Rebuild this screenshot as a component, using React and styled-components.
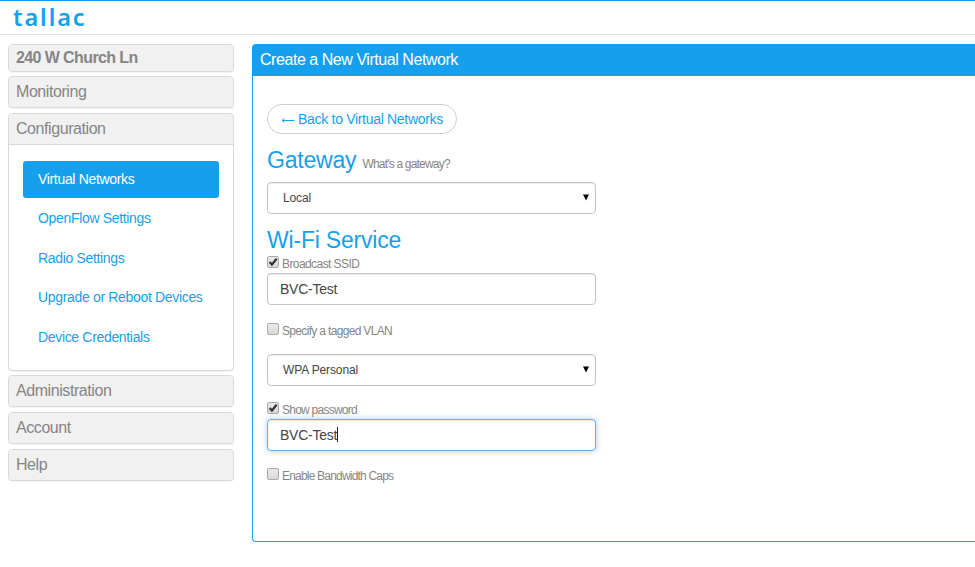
import React from "react";
import styled, { createGlobalStyle, css } from "styled-components";

const blue = "#169fed";

const GlobalStyle = createGlobalStyle`
  * { box-sizing: border-box; }
  body {
    margin: 0;
    background: #fff;
    color: #858585;
    font-family: "Liberation Sans", Arial, sans-serif;
    overflow: hidden;
  }
`;

const Page = styled.div`
  height: 567px;
  overflow: hidden;
`;

const TopBar = styled.header`
  height: 35px;
  border-top: 1px solid ${blue};
  border-bottom: 1px solid #e2e2e2;
  padding-left: 13px;
`;

const Logo = styled.div`
  color: ${blue};
  font: 600 23.5px/32px "Noto Sans", sans-serif;
  letter-spacing: 1.9px;
`;

const Columns = styled.div`
  display: grid;
  grid-template-columns: 226px 1fr;
  column-gap: 18px;
  align-items: start;
  padding: 9px 0 0 8px;
`;

const Sidebar = styled.nav`
  display: flex;
  flex-direction: column;
  gap: 4.6px;
`;

const NavPanel = styled.section`
  border: 1px solid #d9d9d9;
  border-radius: 4px;
  background: #fff;
  box-shadow: 0 1px 1px rgba(0, 0, 0, 0.05);
  overflow: hidden;
`;

const NavHeading = styled.div`
  height: ${(p) => (p.$site ? 25.6 : 30)}px;
  padding-left: 7px;
  background: #f1f1f1;
  font-size: 16px;
  letter-spacing: ${(p) => (p.$site ? -0.6 : -0.43)}px;
  line-height: ${(p) => (p.$site ? 25 : 30)}px;
  font-weight: ${(p) => (p.$site ? 700 : 400)};
`;

const NavList = styled.div`
  display: flex;
  flex-direction: column;
  gap: 2px;
  height: 226px;
  padding: 16px 14px 0;
  border-top: 1px solid #d9d9d9;
`;

const NavLink = styled.a`
  display: block;
  height: 37.5px;
  padding-left: 15px;
  border-radius: 3px;
  font-size: 14px;
  letter-spacing: -0.33px;
  line-height: 37.5px;
  color: ${(p) => (p.$active ? "#fff" : blue)};
  background: ${(p) => (p.$active ? blue : "transparent")};
`;

const Main = styled.main`
  height: 498px;
  border: 1px solid ${blue};
  border-right: 0;
  border-radius: 4px 0 0 4px;
`;

const MainTitle = styled.h1`
  height: 31px;
  margin: 0;
  padding-left: 7px;
  background: ${blue};
  color: #fff;
  font-size: 16px;
  font-weight: 400;
  letter-spacing: -0.45px;
  line-height: 30px;
`;

const Form = styled.div`
  display: flex;
  flex-direction: column;
  align-items: flex-start;
  width: 343px;
  padding: 28px 0 0 14px;
`;

const BackButton = styled.button`
  display: flex;
  align-items: center;
  justify-content: center;
  gap: 3px;
  width: 190px;
  height: 30px;
  padding: 0;
  border: 1px solid #d0d0d0;
  border-radius: 15px;
  background: #fff;
  color: ${blue};
  font: 14px "Liberation Sans", Arial, sans-serif;
  letter-spacing: -0.31px;
`;

const SectionTitle = styled.h2`
  display: flex;
  align-items: baseline;
  gap: 6px;
  margin: ${(p) => p.$top}px 0 0;
  color: ${blue};
  font-size: 23px;
  font-weight: 400;
  letter-spacing: -0.2px;
  line-height: 26px;
`;

const Hint = styled.span`
  color: #858585;
  font-size: 12px;
  letter-spacing: -0.8px;
`;

const boxed = css`
  display: flex;
  align-items: center;
  width: 329px;
  height: 32px;
  margin-top: ${(p) => p.$top || 0}px;
  border: 1px solid ${(p) => (p.$focused ? "#66afe9" : "#c4c4c4")};
  border-radius: 4px;
  background: #fff;
  color: #444;
  box-shadow: ${(p) =>
    p.$focused
      ? "inset 0 1px 1px rgba(0,0,0,.075), 0 0 6px rgba(102,175,233,.6)"
      : "inset 0 1px 1px rgba(0,0,0,.075)"};
`;

const SelectBox = styled.div`
  ${boxed}
  justify-content: space-between;
  padding: 0 6px 1px 15px;
  font-size: 12px;
  letter-spacing: -0.12px;
`;

const InputBox = styled.div`
  ${boxed}
  padding: 0 12px 1px;
  font-size: 14px;
  letter-spacing: -0.25px;
`;

const Caret = styled.span`
  width: 1px;
  height: 15px;
  background: #222;
`;

const CheckRow = styled.label`
  display: flex;
  align-items: flex-start;
  gap: 3px;
  height: 16px;
  margin-top: ${(p) => p.$top || 0}px;
  font-size: 12px;
  line-height: 17px;
  letter-spacing: ${(p) => p.$tracking}px;
`;

const Box = styled.span`
  display: block;
  flex: none;
  width: 12px;
  height: 12px;
  border: 1px solid #aaa;
  border-radius: 2px;
  background: linear-gradient(#e9e9e9, #d9d9d9);

  svg { display: block; }
`;

function Check({ label, checked, top, tracking }) {
  return (
    <CheckRow $top={top} $tracking={tracking}>
      <Box>
        {checked && (
          <svg width="10" height="10" viewBox="0 0 10 10">
            <path d="M1.6 5.1 3.9 7.6 8.6 1.7" fill="none" stroke="#303030" strokeWidth="2.2" />
          </svg>
        )}
      </Box>
      <span>{label}</span>
    </CheckRow>
  );
}

function Select({ value, top }) {
  return (
    <SelectBox $top={top}>
      <span>{value}</span>
      <svg width="6" height="7" viewBox="0 0 6 7">
        <path d="M0 .5h6L3 6.5z" fill="#000" />
      </svg>
    </SelectBox>
  );
}

const links = [
  "Virtual Networks",
  "OpenFlow Settings",
  "Radio Settings",
  "Upgrade or Reboot Devices",
  "Device Credentials",
];

export default function App() {
  return (
    <Page>
      <GlobalStyle />
      <TopBar>
        <Logo>tallac</Logo>
      </TopBar>
      <Columns>
        <Sidebar>
          <NavPanel>
            <NavHeading $site>240 W Church Ln</NavHeading>
          </NavPanel>
          <NavPanel>
            <NavHeading>Monitoring</NavHeading>
          </NavPanel>
          <NavPanel>
            <NavHeading>Configuration</NavHeading>
            <NavList>
              {links.map((text, i) => (
                <NavLink key={text} $active={i === 0}>{text}</NavLink>
              ))}
            </NavList>
          </NavPanel>
          {["Administration", "Account", "Help"].map((text) => (
            <NavPanel key={text}>
              <NavHeading>{text}</NavHeading>
            </NavPanel>
          ))}
        </Sidebar>
        <Main>
          <MainTitle>Create a New Virtual Network</MainTitle>
          <Form>
            <BackButton>
              <svg width="14" height="9" viewBox="0 0 14 9">
                <path d="M1 5.5h12.5M3.5 3.5 1 5.5l2.5 2" fill="none" stroke={blue} />
              </svg>
              <span>Back to Virtual Networks</span>
            </BackButton>
            <SectionTitle $top={13}>
              Gateway <Hint>What's a gateway?</Hint>
            </SectionTitle>
            <Select value="Local" top={5} />
            <SectionTitle $top={13}>Wi-Fi Service</SectionTitle>
            <Check label="Broadcast SSID" checked top={3} tracking={-0.58} />
            <InputBox $top={1}>BVC-Test</InputBox>
            <Check label="Specify a tagged VLAN" top={18} tracking={-0.67} />
            <Select value="WPA Personal" top={15} />
            <Check label="Show password" checked top={16} tracking={-0.75} />
            <InputBox $top={1} $focused>
              BVC-Test<Caret />
            </InputBox>
            <Check label="Enable Bandwidth Caps" top={17} tracking={-0.8} />
          </Form>
        </Main>
      </Columns>
    </Page>
  );
}
